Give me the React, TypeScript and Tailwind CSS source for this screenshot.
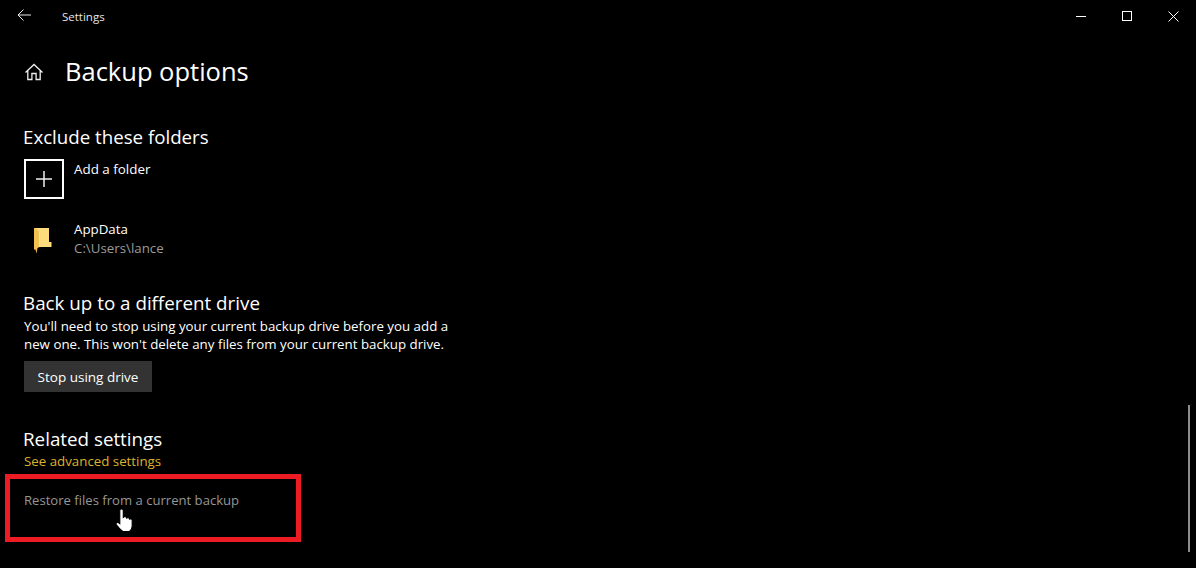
export default function App() {
  const font = { fontFamily: '"Open Sans", "Noto Sans", sans-serif' };
  return (
    <div className="relative h-[568px] w-[1196px] overflow-hidden bg-black text-white" style={font}>
      <header className="flex h-[32px] items-center">
        <button className="flex h-[32px] w-[48px] items-center justify-center">
          <svg width="16" height="16" viewBox="0 0 16 16" fill="none" stroke="#e8e8e8" strokeWidth="1" className="-mt-[2px]">
            <path d="M2 8H15M7.5 2.500L2 8l5.500 5.500" />
          </svg>
        </button>
        <span className="ml-[14px] mt-px text-[11.5px] text-[#e6e6e6]">Settings</span>
        <div className="ml-auto flex">
          <div className="flex h-[32px] w-[46px] items-center justify-center"><div className="h-px w-[10px] bg-white" /></div>
          <div className="flex h-[32px] w-[46px] items-center justify-center"><div className="h-[10px] w-[10px] border border-white" /></div>
          <div className="flex h-[32px] w-[46px] items-center justify-center">
            <svg width="11" height="11" viewBox="0 0 11 11" stroke="#fff" strokeWidth="1"><path d="M.5.5l10 10M10.500.5l-10 10" /></svg>
          </div>
        </div>
      </header>

      <main className="pl-[24px]">
        <div className="mt-[21px] flex h-[36px] items-center">
          <svg width="20" height="20" viewBox="0 0 20 20" fill="none" stroke="#eee" strokeWidth="1.3" className="mt-[1px]">
            <path d="M1.500 10.500L10 2.500l8.500 8M3.800 8.600V17.500h4.100v-6h4.200v6h4.100V8.600" />
          </svg>
          <h1 className="ml-[21px] text-[25.5px] leading-[36px] text-white">Backup options</h1>
        </div>

        <h2 className="mt-[34px] -ml-px text-[18.7px] leading-[28px]">Exclude these folders</h2>
        <div className="mt-[8px] flex h-[40px] items-start">
          <div className="flex h-[40px] w-[40px] items-center justify-center border-2 border-white">
            <svg width="18" height="18" viewBox="0 0 18 18" stroke="#eeeeee" strokeWidth="1.5"><path d="M9 1v16M1 9h16" /></svg>
          </div>
          <span className="ml-[10px] text-[13.4px] leading-[20px]">Add a folder</span>
        </div>
        <div className="mt-[21px] flex h-[40px] items-start">
          <div className="flex h-[40px] w-[40px] items-center justify-center pr-[3px]">
            <svg width="18" height="26" viewBox="0 0 18 26" className="mt-[1px]">
              <path d="M0 0h15v14h2.500v5H0z" fill="#fcdc7c" />
              <path d="M0 0h1l4.500 4v15l-2 1-1 5.500-1-4H0z" fill="#f2c14f" />
              <path d="M5.500 4V19" stroke="#ffeeb0" strokeWidth="0.7" />
            </svg>
          </div>
          <div className="ml-[10px] text-[13.3px] leading-[19px]">
            <div>AppData</div>
            <div className="text-[#9a9a9a]">C:\Users\lance</div>
          </div>
        </div>

        <h2 className="mt-[29px] -ml-px text-[18.8px] leading-[28px]">Back up to a different drive</h2>
        <p className="w-[440px] text-[13.3px] leading-[18px]">
          You'll need to stop using your current backup drive before you add a new one. This won't delete any files from your current backup drive.
        </p>
        <button className="mt-[8px] flex h-[31px] w-[128px] items-center justify-center bg-[#333333] pt-[2px] text-[13.5px]">Stop using drive</button>

        <h2 className="mt-[33px] -ml-px text-[18.8px] leading-[28px]">Related settings</h2>
        <div className="-mt-[2px] text-[13.3px] leading-[20px] text-[#dcb22e]">See advanced settings</div>
        <div className="mt-[19px] text-[13.1px] leading-[20px] text-[#969696]">Restore files from a current backup</div>
      </main>

      <div className="absolute right-[6px] top-[405px] h-[147px] w-[2px] bg-[#8c8c8c]" />
      <div className="absolute left-[5px] top-[474px] h-[68px] w-[296px] border-[5px] border-[#ed1c24]" />
      <svg className="absolute left-[115px] top-[508px]" width="19" height="24.500" viewBox="0 0 16 26" preserveAspectRatio="none">
        <path d="M4 2.500c0-1.800 3-1.800 3 0V10l.6-.5c.8-.6 1.900-.3 2.100.7l.2.600c.7-.8 2.100-.5 2.300.6l.1.500c.8-.6 2.200-.2 2.200 1V19c0 3-1.500 5-2.500 6H7c-2-1-4.500-5-6-7.500-.8-1.500 1-3 3-1z" fill="#fff" stroke="#000" strokeWidth="1" />
      </svg>
    </div>
  );
}
